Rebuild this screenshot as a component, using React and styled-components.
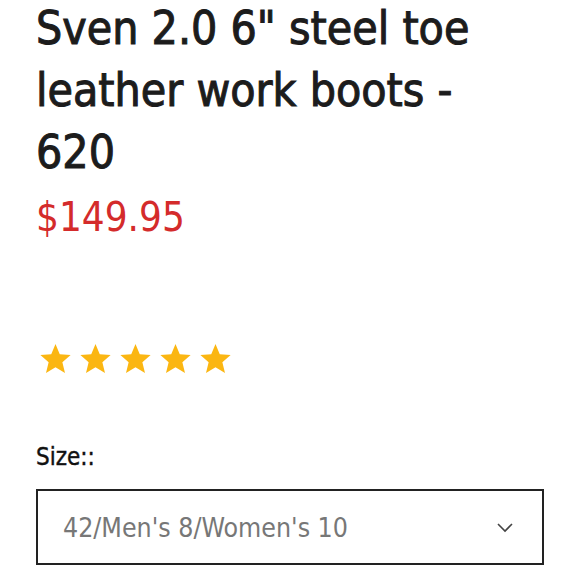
import React from 'react';
import styled, { createGlobalStyle } from 'styled-components';

const GlobalStyle = createGlobalStyle`
  body {
    margin: 0;
    background: #ffffff;
    font-family: "DejaVu Sans Condensed", "Liberation Sans", sans-serif;
  }
`

const Page = styled.div`
  width: 580px;
  height: 580px;
  overflow: hidden;
  padding: 0 36px 0 36px;
  box-sizing: border-box;
`

/*product title*/
const Title = styled.h1`
  margin: -3px 0 0 0;
  font-size: 46px;
  font-weight: 400;
  line-height: 62px;
  color: #1c1c1c;
  -webkit-text-stroke: 1px #1c1c1c;
`

const Price = styled.div`
  font-size: 40px;
  line-height: 68px;
  color: #d42b2b;
  margin-top: 0px;
`

const Stars = styled.div`
  display: flex;
  gap: 7px;
  margin-top: 91px;
  padding-left: 3px;
`

const Label = styled.div`
  margin-top: 67px;
  font-size: 24px;
  line-height: 30px;
  color: #111;
  -webkit-text-stroke: 0.4px #111;
`

const Select = styled.div`
  margin-top: 17px;
  height: 76px;
  border: 2px solid #222;
  box-sizing: border-box;
  display: flex;
  align-items: center;
  justify-content: space-between;
  padding: 0 28px 0 25px;
  font-size: 26.5px;
  color: #777;
`

const Star = () => (
  <svg width="33" height="33" viewBox="0 0 24 24">
    <path d="M12 1.5l3.1 7.4 7.9.6-6 5.2 1.9 7.8L12 18.3l-6.9 4.2 1.9-7.8-6-5.2 7.9-.6z" fill="#fbb612" />
  </svg>
)

function App() {
  return (
    <Page>
      <GlobalStyle />
      <Title>Sven 2.0 6" steel toe leather work boots - 620</Title>
      <Price>$149.95</Price>
      <Stars>
        {[0, 1, 2, 3, 4].map(i => <Star key={i} />)}
      </Stars>
      <Label>Size::</Label>
      <Select>
        <span>42/Men's 8/Women's 10</span>
        <svg width="18" height="12" viewBox="0 0 18 12">
          <path d="M2 3l7 7 7-7" fill="none" stroke="#444" strokeWidth="1.6" />
        </svg>
      </Select>
    </Page>
  );
}

export default App;
